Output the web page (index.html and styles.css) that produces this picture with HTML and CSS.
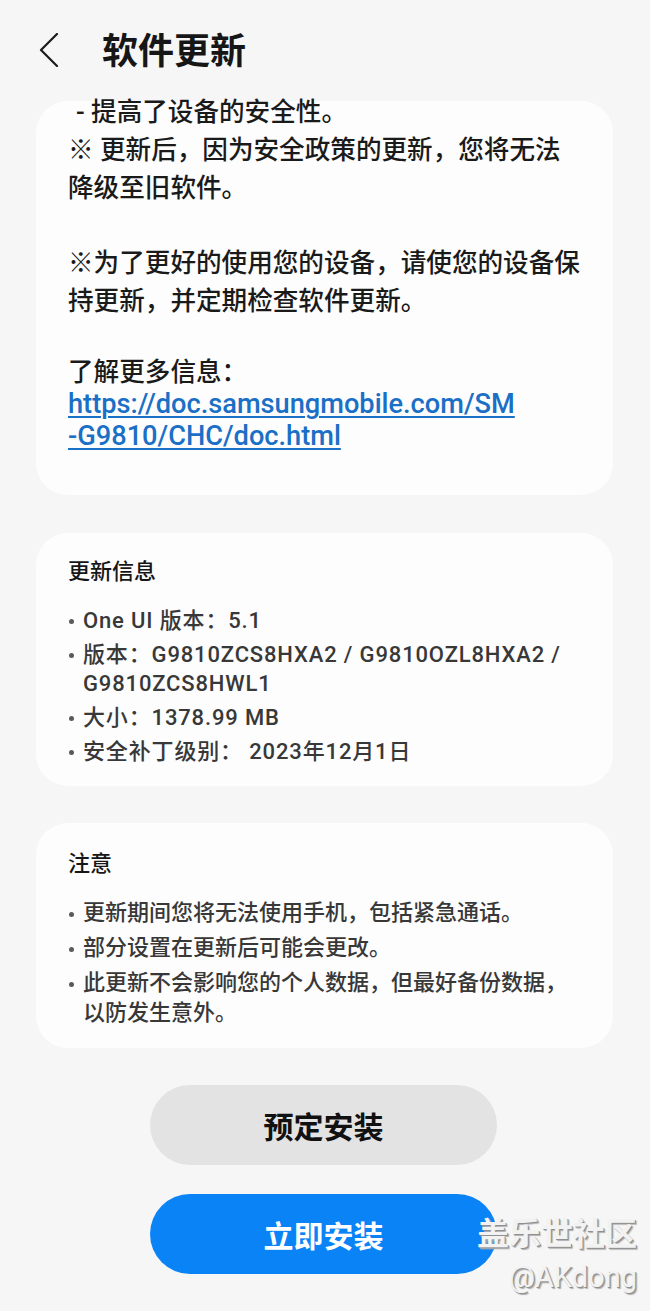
FILE: index.html
```html
<!DOCTYPE html>
<html lang="zh-CN">
<head>
    <meta charset="UTF-8">
    <meta name="viewport" content="width=device-width, initial-scale=1.0">
    <title>软件更新</title>
    <link rel="stylesheet" href="styles.css">
</head>
<body>
    <header class="top-bar">
        <button class="back-btn" aria-label="返回">
            <svg width="20" height="34" viewBox="0 0 20 34">
                <path d="M18 1 L2 17 L18 33" fill="none" stroke="#1a1a1a" stroke-width="2.2" stroke-linecap="round" stroke-linejoin="round"/>
            </svg>
        </button>
        <h1>软件更新</h1>
    </header>

    <main class="content">
        <section class="card notes-card">
            <p class="lead">- 提高了设备的安全性。</p>
            <p>※ 更新后，因为安全政策的更新，您将无法降级至旧软件。</p>
            <p class="gap">※为了更好的使用您的设备，请使您的设备保持更新，并定期检查软件更新。</p>
            <p class="more">了解更多信息：</p>
            <a class="doc-link" href="#">https://doc.samsungmobile.com/SM<br>-G9810/CHC/doc.html</a>
        </section>

        <section class="card info-card">
            <h2>更新信息</h2>
            <ul class="bullets">
                <li>One UI 版本：5.1</li>
                <li>版本：G9810ZCS8HXA2 / G9810OZL8HXA2 / G9810ZCS8HWL1</li>
                <li>大小：1378.99 MB</li>
                <li>安全补丁级别： 2023年12月1日</li>
            </ul>
        </section>

        <section class="card caution-card">
            <h2>注意</h2>
            <ul class="bullets">
                <li>更新期间您将无法使用手机，包括紧急通话。</li>
                <li>部分设置在更新后可能会更改。</li>
                <li>此更新不会影响您的个人数据，但最好备份数据，以防发生意外。</li>
            </ul>
        </section>

        <div class="actions">
            <button class="btn btn-schedule">预定安装</button>
            <button class="btn btn-install">立即安装</button>
        </div>
    </main>

    <div class="watermark">
        <span class="wm-name">盖乐世社区</span>
        <span class="wm-user">@AKdong</span>
    </div>
</body>
</html>
```

FILE: styles.css
```css
body {
    margin: 0;
    background-color: #f6f6f6;
    font-family: Roboto, "Noto Sans CJK SC", sans-serif;
    color: #1c1c1c;
    position: relative;
    min-height: 1311px;
}
.top-bar {
    height: 101px;
    display: flex;
    align-items: flex-start;
    padding-top: 30px;
    box-sizing: border-box;
}
.back-btn {
    background: none;
    border: none;
    padding: 0;
    margin: 3px 0 0 39px;
    width: 20px;
    height: 34px;
    display: flex;
}
.top-bar h1 {
    margin: 0 0 0 43px;
    font-size: 36px;
    line-height: 44px;
    font-weight: 700;
    color: #161616;
}
.content {
    display: flex;
    flex-direction: column;
}
.card {
    background-color: #fdfdfd;
    border-radius: 32px;
    margin: 0 37px 37px 36px;
    padding: 0 30px 0 32px;
}
.notes-card {
    font-size: 25.6px;
    line-height: 38px;
    font-weight: 500;
    color: #1a1a1a;
    padding-bottom: 43px;
    margin-bottom: 38px;
}
.notes-card p {
    margin: 0;
}
.notes-card .lead {
    line-height: 22px;
    margin-bottom: 8px;
    padding-left: 8px;
}
.notes-card .gap {
    margin-top: 37px;
}
.notes-card .more {
    margin-top: 36px;
    line-height: 32px;
}
.doc-link {
    display: block;
    font-size: 27.2px;
    line-height: 32px;
    font-weight: 500;
    color: #1a6fc6;
    text-decoration: underline;
    text-decoration-thickness: 2px;
    text-underline-offset: 3px;
}
.info-card {
    padding-top: 24px;
    padding-bottom: 20px;
}
.caution-card {
    padding-top: 26px;
    padding-bottom: 20px;
}
.card h2 {
    margin: 0 0 19px;
    font-size: 22px;
    line-height: 30px;
    font-weight: 500;
    color: #161616;
}
.bullets {
    list-style: none;
    margin: 0;
    padding: 0;
    font-size: 22px;
    font-weight: 500;
    color: #383838;
}
.bullets li {
    position: relative;
    padding-left: 15px;
    margin-bottom: 5px;
}
.bullets li:last-child {
    margin-bottom: 0;
}
.bullets li::before {
    content: "";
    position: absolute;
    left: 1px;
    top: 13px;
    width: 5px;
    height: 5px;
    border-radius: 50%;
    background-color: #5a5a5a;
}
.info-card .bullets {
    line-height: 29px;
    letter-spacing: 0.85px;
}
.caution-card .bullets {
    line-height: 30px;
}
.caution-card .bullets li::before {
    top: 14px;
}
.actions {
    display: flex;
    flex-direction: column;
    align-items: flex-start;
    padding-left: 150px;
    gap: 29px;
}
.btn {
    width: 347px;
    height: 80px;
    border: none;
    border-radius: 40px;
    font-family: Roboto, "Noto Sans CJK SC", sans-serif;
    font-size: 30px;
    font-weight: 700;
}
.btn-schedule {
    background-color: #e3e3e3;
    color: #111;
}
.btn-install {
    background-color: #0a83f7;
    color: #fff;
}
.watermark {
    position: absolute;
    right: 13px;
    top: 1212px;
    display: flex;
    flex-direction: column;
    align-items: flex-end;
    color: #f2f2f2;
    text-shadow: 1px 1px 0 #8f8f8f, 2px 2px 1px #b0b0b0;
}
.wm-name {
    font-size: 32px;
    line-height: 44px;
    font-weight: 700;
}
.wm-user {
    font-size: 29px;
    line-height: 38px;
    margin-top: 2px;
}
```
